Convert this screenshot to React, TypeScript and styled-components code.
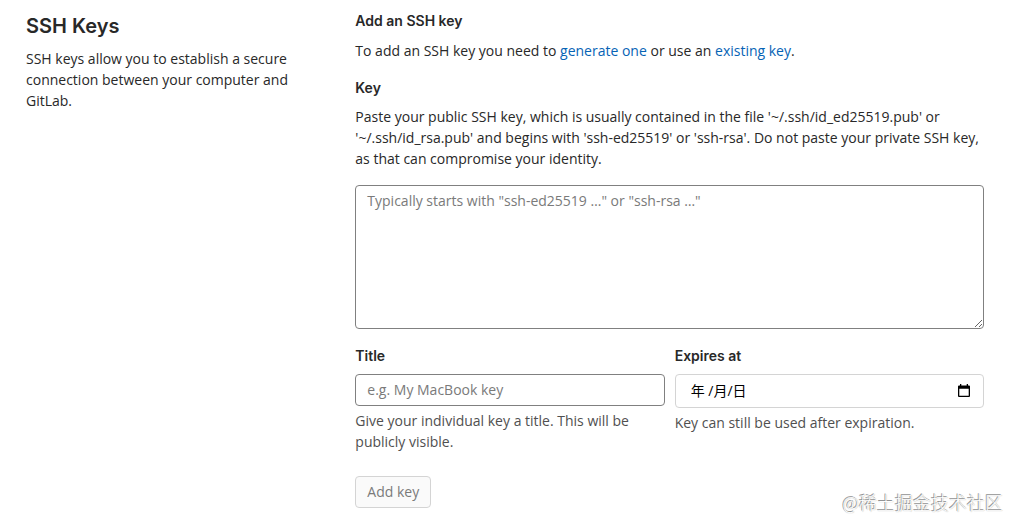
import React from 'react';
import styled, { createGlobalStyle } from 'styled-components';

const headingFont = 'Inter, "Noto Sans CJK SC", sans-serif';
const bodyFont = '"Open Sans", "Noto Sans CJK SC", sans-serif';

const GlobalStyle = createGlobalStyle`
  *, *::before, *::after { box-sizing: border-box; }
  body {
    margin: 0;
    background: #fff;
    color: #282828;
    font-family: ${bodyFont};
    font-size: 14px;
    line-height: 21px;
  }
  input, textarea, button { font: inherit; }
`;

const Page = styled.main`
  display: grid;
  grid-template-columns: repeat(12, minmax(0, 1fr));
  column-gap: 30px;
  padding: 10px 36px 22px 26px;
`;

const Intro = styled.section`
  grid-column: span 4;
`;

const Content = styled.section`
  grid-column: span 8;
`;

const PageTitle = styled.h1`
  margin: 0 0 6px;
  font-family: ${headingFont};
  font-size: 20px;
  font-weight: 600;
  line-height: 32px;
`;

const SectionTitle = styled.h2`
  margin: 0 0 9px;
  font-family: ${headingFont};
  font-size: 14px;
  font-weight: 600;
`;

const Text = styled.p`
  margin: 0;
`;

const Link = styled.a`
  color: #0663b5;
  text-decoration: none;
`;

const Form = styled.form`
  margin-top: 16px;
`;

const Label = styled.label`
  display: block;
  margin-bottom: 8px;
  font-family: ${headingFont};
  font-weight: 600;
`;

const KeyField = styled.textarea`
  display: block;
  width: 100%;
  height: 144px;
  margin: 16px 0;
  padding: 4px 11px;
  border: 1px solid #808080;
  border-radius: 4px;
  background: #fff;
  color: #282828;
  resize: vertical;
  &::placeholder { color: #7a7a7a; opacity: 1; }
`;

const FieldRow = styled.div`
  display: grid;
  grid-template-columns: 1fr 1fr;
  column-gap: 10px;
`;

const TextField = styled.input`
  display: block;
  width: 100%;
  height: 32px;
  padding: 0 11px 1px;
  border: 1px solid #808080;
  border-radius: 4px;
  background: #fff;
  color: #282828;
  &::placeholder { color: #7a7a7a; opacity: 1; }
`;

const DateBox = styled.div`
  display: flex;
  align-items: center;
  height: 34px;
  padding: 0 12px 0 15px;
  border: 1px solid #d4d4d4;
  border-radius: 4px;
`;

const DateField = styled.input`
  flex: 1;
  min-width: 0;
  padding: 0 0 2px;
  border: 0;
  background: transparent;
  color: #000;
  &::placeholder { color: #000; opacity: 1; }
`;

const PickerButton = styled.button`
  display: flex;
  padding: 0;
  border: 0;
  background: transparent;
`;

const Help = styled.p`
  margin: 4px 0 0;
  color: #505050;
`;

const SubmitButton = styled.button`
  height: 32px;
  margin-top: 24px;
  padding: 0 11px 1px;
  border: 1px solid #d4d4d4;
  border-radius: 4px;
  background: #fafafa;
  color: #7a7a7a;
`;

const Watermark = styled.div`
  position: absolute;
  right: 17px;
  bottom: 14px;
  color: #fff;
  font-family: "Noto Sans CJK SC", sans-serif;
  font-size: 18px;
  font-weight: 300;
  line-height: 27px;
  text-shadow: -1px -1px 0 #949494, 0 0 1px #949494;
`;

export default function App() {
  return (
    <>
      <GlobalStyle />
      <Page>
        <Intro>
          <PageTitle>SSH Keys</PageTitle>
          <Text>
            SSH keys allow you to establish a secure connection between your computer and GitLab.
          </Text>
        </Intro>
        <Content>
          <SectionTitle>Add an SSH key</SectionTitle>
          <Text>
            To add an SSH key you need to <Link href="#generate">generate one</Link> or use an{' '}
            <Link href="#existing">existing key</Link>.
          </Text>
          <Form onSubmit={(event) => event.preventDefault()}>
            <Label htmlFor="key">Key</Label>
            <Text id="key-help">
              Paste your public SSH key, which is usually contained in the file
              '~/.ssh/id_ed25519.pub' or '~/.ssh/id_rsa.pub' and begins with 'ssh-ed25519' or
              'ssh-rsa'. Do not paste your private SSH key, as that can compromise your identity.
            </Text>
            <KeyField
              id="key"
              aria-describedby="key-help"
              placeholder={'Typically starts with "ssh-ed25519 …" or "ssh-rsa …"'}
            />
            <FieldRow>
              <div>
                <Label htmlFor="title">Title</Label>
                <TextField id="title" type="text" placeholder="e.g. My MacBook key" />
                <Help>Give your individual key a title. This will be publicly visible.</Help>
              </div>
              <div>
                <Label htmlFor="expires">Expires at</Label>
                <DateBox>
                  <DateField id="expires" type="text" placeholder="年 /月/日" />
                  <PickerButton type="button" aria-label="Choose date">
                    <svg width="14" height="14" viewBox="0 0 14 14" aria-hidden="true">
                      <path
                        fill="#000"
                        fillRule="evenodd"
                        d="M3 0h1.3v1.5h5.4V0H11v1.5h1a1 1 0 0 1 1 1V12a1 1 0 0 1-1 1H2a1 1 0 0 1-1-1V2.5a1 1 0 0 1 1-1h1zM2.3 4.8v6.9h9.4V4.8z"
                      />
                    </svg>
                  </PickerButton>
                </DateBox>
                <Help>Key can still be used after expiration.</Help>
              </div>
            </FieldRow>
            <SubmitButton type="submit">Add key</SubmitButton>
          </Form>
        </Content>
      </Page>
      <Watermark>@稀土掘金技术社区</Watermark>
    </>
  );
}
